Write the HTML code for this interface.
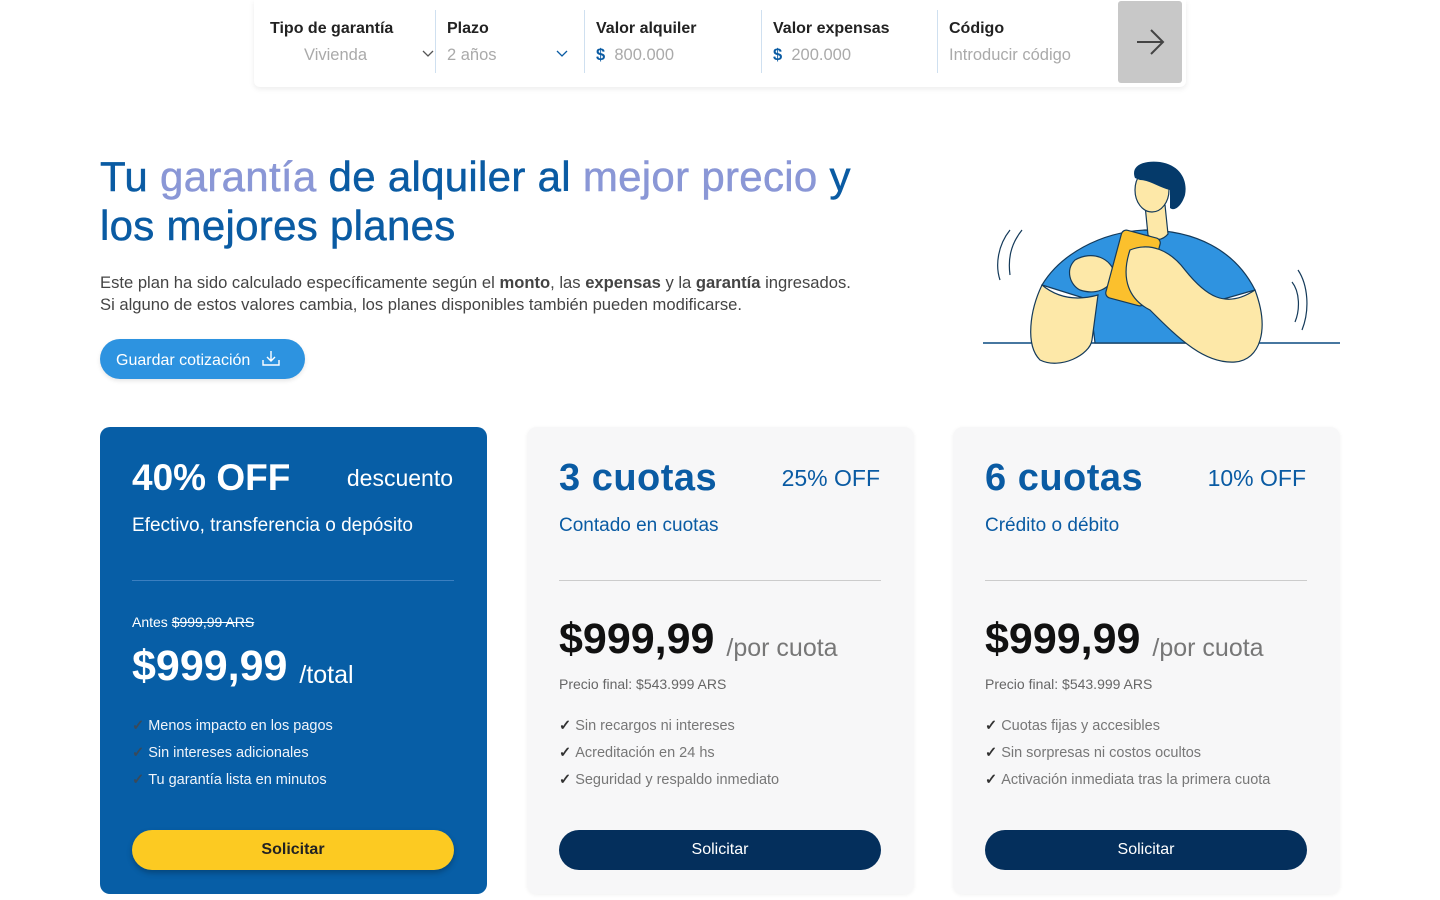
<!DOCTYPE html>
<html><head><meta charset="utf-8"><style>
*{margin:0;padding:0;box-sizing:border-box}
body{width:1440px;height:900px;overflow:hidden;background:#fff;font-family:"Liberation Sans",sans-serif;position:relative;color:#333}
.abs{position:absolute}
.bar{left:254px;top:0;width:932px;height:87px;background:#fff;border-radius:0 0 6px 6px;box-shadow:0 2px 6px rgba(0,0,0,.08)}
.f{position:absolute;top:10px;height:63px}
.f .l{position:absolute;top:10px;font-size:16px;font-weight:bold;color:#222;white-space:nowrap}
.f .v{position:absolute;top:36px;font-size:16.5px;color:#aaa;white-space:nowrap}
.sep{position:absolute;top:10px;width:1px;height:63px;background:#cfe0f0}
.go{left:1118px;top:1px;width:64px;height:82px;background:#c8c8c8;border-radius:3px}
h1{position:absolute;left:100px;top:152px;font-size:42px;line-height:49px;font-weight:normal;color:#0a5ba3;letter-spacing:0.3px;-webkit-text-stroke:0.5px #0a5ba3}
h1 span{color:#8a97d6;-webkit-text-stroke:0.5px #8a97d6}
.p{left:100px;top:272px;font-size:16.6px;line-height:22px;color:#444}
.btn{left:100px;top:339px;width:205px;height:40px;background:#2d93e0;border-radius:20px;color:#fff;font-size:16px;padding:10px 16px;box-shadow:0 2px 4px rgba(0,0,0,.1)}
.card{position:absolute;top:427px;width:387px;height:467px;border-radius:10px;background:#f7f7f8;box-shadow:0 1px 4px rgba(0,0,0,.06)}
.card.b{background:#075ea6;box-shadow:none}
.card .t{position:absolute;left:32px;top:30px;font-size:38px;font-weight:bold;color:#0a5ba3;letter-spacing:0.5px}
.card .o{position:absolute;right:34px;top:38px;font-size:23px;color:#0a5ba3}
.card .s{position:absolute;left:32px;top:88px;font-size:19px;color:#0a5ba3}
.card hr{position:absolute;left:32px;width:322px;top:153px;border:0;border-top:1px solid #ccc}
.card .pr{position:absolute;left:32px;top:188px;font-size:43px;font-weight:bold;color:#111;white-space:nowrap}
.card .pr small{font-size:25px;font-weight:normal;color:#777;position:relative;top:3px}
.card .pf{position:absolute;left:32px;top:249px;font-size:14px;color:#666}
.card ul{position:absolute;left:32px;top:286px;list-style:none;font-size:14.5px;color:#777;line-height:27px}
.card ul li:before{content:"✓ ";color:#333;font-weight:bold}
.card .sb{position:absolute;left:32px;top:403px;width:322px;height:40px;border-radius:20px;background:#042f5c;color:#fff;font-size:16px;text-align:center;line-height:40px}
.b .t,.b .o,.b .s{color:#fff}
.b hr{border-top-color:#3b7fc0}
.b .pr{color:#fff;top:215px}.b .pr small{color:#fff}
.b ul{color:#f0f4fa}.b ul li:before{color:#3a4a5a}
.b .sb{background:#fcca22;color:#222;font-weight:bold;box-shadow:0 3px 6px rgba(0,0,0,.25)}
</style></head><body>
<div class="abs bar">
 <div class="f" style="left:16px"><div class="l">Tipo de garantía</div><div class="v" style="left:34px">Vivienda</div><svg class="abs" style="left:152px;top:40px" width="12" height="8"><path d="M1 1L6 6L11 1" stroke="#555" stroke-width="1.3" fill="none"/></svg></div>
 <div class="sep" style="left:181px"></div>
 <div class="f" style="left:193px"><div class="l">Plazo</div><div class="v">2 años</div><svg class="abs" style="left:109px;top:40px" width="12" height="8"><path d="M1 1L6 6L11 1" stroke="#0a5ba3" stroke-width="1.3" fill="none"/></svg></div>
 <div class="sep" style="left:330px"></div>
 <div class="f" style="left:342px"><div class="l">Valor alquiler</div><div class="v"><b style="color:#0a5ba3">$</b>&nbsp; 800.000</div></div>
 <div class="sep" style="left:507px"></div>
 <div class="f" style="left:519px"><div class="l">Valor expensas</div><div class="v"><b style="color:#0a5ba3">$</b>&nbsp; 200.000</div></div>
 <div class="sep" style="left:683px"></div>
 <div class="f" style="left:695px"><div class="l">Código</div><div class="v">Introducir código</div></div>
</div>
<div class="abs go"><svg width="64" height="82"><path d="M19 41H44M33 29L45 41L33 53" stroke="#444" stroke-width="2" fill="none"/></svg></div>

<h1>Tu <span>garantía</span> de alquiler al <span>mejor precio</span> y<br>los mejores planes</h1>
<div class="abs p">Este plan ha sido calculado específicamente según el <b>monto</b>, las <b>expensas</b> y la <b>garantía</b> ingresados.<br>Si alguno de estos valores cambia, los planes disponibles también pueden modificarse.</div>
<div class="abs btn">Guardar cotización <svg width="20" height="18" style="vertical-align:-2px;margin-left:6px"><path d="M10 2V12M6 8L10 12L14 8M2 11V16H18V11" stroke="#fff" stroke-width="1.4" fill="none"/></svg></div>

<svg class="abs" style="left:980px;top:150px" width="370" height="230" viewBox="0 0 370 230">
<path d="M3 193H360" stroke="#0a4a80" stroke-width="1.5"/>
<path d="M62 135C80 105 120 82 165 80C215 80 255 100 275 140L240 150L235 193H115L110 150Z" fill="#2f93e0" stroke="#143a5a" stroke-width="1.2"/>
<path d="M165 55L168 85C175 92 183 90 188 84L185 55Z" fill="#fde8a8" stroke="#143a5a" stroke-width="1.2"/>
<ellipse cx="172" cy="40" rx="17" ry="22" fill="#fde8a8" stroke="#143a5a" stroke-width="1.2"/>
<path d="M155 28C150 15 165 10 180 12C200 15 208 30 205 45C202 55 195 62 190 58L190 40C180 38 170 30 160 30Z" fill="#053a6a"/>
<path d="M62 135C50 160 45 195 60 210C80 220 110 205 112 190L118 145C100 150 80 150 62 135Z" fill="#fde8a8" stroke="#143a5a" stroke-width="1.2"/>
<path d="M95 110C112 100 132 108 135 125C130 140 115 145 100 140C90 135 85 120 95 110Z" fill="#fde8a8" stroke="#143a5a" stroke-width="1.2"/>
<rect x="133" y="83" width="40" height="70" rx="5" transform="rotate(15 153 118)" fill="#fbc02d" stroke="#143a5a" stroke-width="1.2"/>
<path d="M150 100C170 92 190 100 205 120C225 145 245 160 275 140C290 180 280 210 255 212C225 214 200 190 170 160C150 150 140 130 150 100Z" fill="#fde8a8" stroke="#143a5a" stroke-width="1.2"/>
<path d="M30 80C18 95 15 115 20 130M42 80C30 95 28 110 30 125M318 120C328 135 330 160 322 180M312 132C320 142 320 160 315 172" stroke="#143a5a" stroke-width="1.2" fill="none"/>
</svg>

<div class="card b" style="left:100px">
 <div class="t" style="font-size:37px;letter-spacing:0">40% OFF</div><div class="o" style="top:38px">descuento</div>
 <div class="s">Efectivo, transferencia o depósito</div><hr>
 <div class="abs" style="left:32px;top:187px;font-size:14px;color:#fff">Antes <s>$999,99 ARS</s></div>
 <div class="pr">$999,99 <small>/total</small></div>
 <ul><li>Menos impacto en los pagos</li><li>Sin intereses adicionales</li><li>Tu garantía lista en minutos</li></ul>
 <div class="sb">Solicitar</div>
</div>
<div class="card" style="left:527px">
 <div class="t">3 cuotas</div><div class="o">25% OFF</div><div class="s">Contado en cuotas</div><hr>
 <div class="pr">$999,99 <small>/por cuota</small></div><div class="pf">Precio final: $543.999 ARS</div>
 <ul><li>Sin recargos ni intereses</li><li>Acreditación en 24 hs</li><li>Seguridad y respaldo inmediato</li></ul>
 <div class="sb">Solicitar</div>
</div>
<div class="card" style="left:953px">
 <div class="t">6 cuotas</div><div class="o">10% OFF</div><div class="s">Crédito o débito</div><hr>
 <div class="pr">$999,99 <small>/por cuota</small></div><div class="pf">Precio final: $543.999 ARS</div>
 <ul><li>Cuotas fijas y accesibles</li><li>Sin sorpresas ni costos ocultos</li><li>Activación inmediata tras la primera cuota</li></ul>
 <div class="sb">Solicitar</div>
</div>
</body></html>
